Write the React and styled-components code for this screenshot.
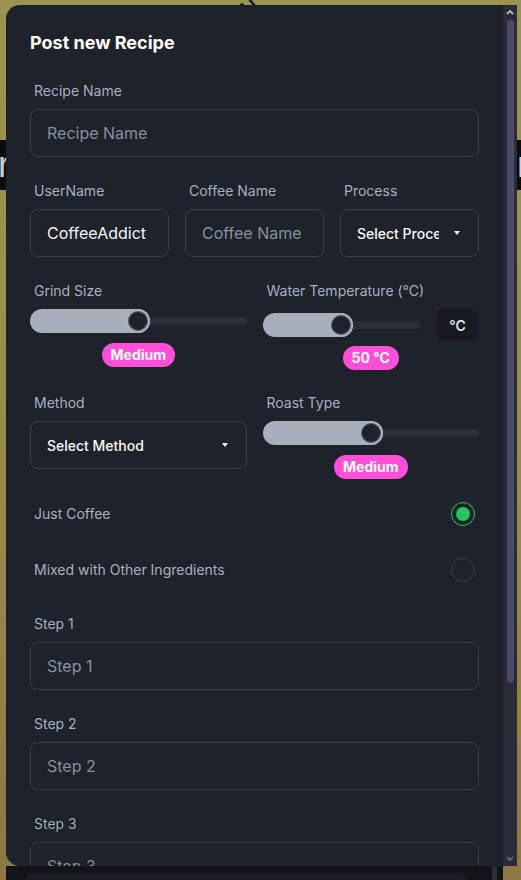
import React from "react";
import styled, { createGlobalStyle } from "styled-components";

const Global = createGlobalStyle`
  html, body { margin: 0; padding: 0; }
  body {
    background: linear-gradient(180deg, #9d9350 0%, #988b4b 55%, #8d7843 100%);
    font-family: Inter, "Noto Sans", sans-serif;
    overflow: hidden;
  }
  * { box-sizing: border-box; }
`;

/* ---------- backdrop page ---------- */
const Page = styled.div`
  height: 880px;
  display: flex;
  flex-direction: column;
  overflow: hidden;
`;

const LogoMark = styled.svg`
  display: block;
  margin-left: 238px;
  flex-shrink: 0;
`;

const HeroBand = styled.div`
  margin-top: 134px;
  height: 50px;
  background: #0b0b0c;
  display: flex;
  justify-content: space-between;
  align-items: center;
  overflow: hidden;
`;

const HeroLetter = styled.span`
  font-family: "Liberation Sans", Arial, sans-serif;
  font-size: 36px;
  line-height: 1;
  color: #cfcfcf;
  margin: ${(p) => (p.$right ? "0 -14px 0 0" : "0 0 0 -2px")};
  width: ${(p) => (p.$right ? "18px" : "auto")};
`;

const BottomPanel = styled.div`
  margin-top: auto;
  margin-left: 6px;
  width: 497px;
  height: 14px;
  background: #111418;
  display: flex;
  padding: 7px 6px 0 19px;
`;

const BottomCard = styled.div`
  width: 442px;
  background: #1a1d23;
  border-radius: 12px 12px 0 0;
`;

const BottomStripe = styled.div`
  width: 5px;
  margin-left: auto;
  margin-top: -7px;
  background: #2b2d3d;
`;

/* ---------- modal ---------- */
const Overlay = styled.div`
  position: fixed;
  top: 5px;
  left: 6px;
  width: 511px;
  height: 861px;
  display: flex;
`;

const Modal = styled.div`
  flex: 1;
  min-width: 0;
  background: #1e222b;
  border-radius: 14px 0 0 14px;
  overflow: hidden;
  padding: 24px 24px 0;
  display: flex;
  flex-direction: column;
`;

const Title = styled.h2`
  margin: 0 0 24px;
  font-size: 18px;
  line-height: 28px;
  font-weight: 700;
  color: #ffffff;
`;

const Section = styled.div`
  margin-bottom: ${(p) => p.$mb ?? 24}px;
`;

const Grid = styled.div`
  display: grid;
  grid-template-columns: repeat(${(p) => p.$cols}, 1fr);
  column-gap: 16px;
  align-items: start;
`;

const Field = styled.div`
  display: flex;
  flex-direction: column;
  gap: 8px;
  min-width: 0;
`;

const Label = styled.label`
  font-size: 14px;
  line-height: 20px;
  color: #a6b0c0;
  padding-left: 4px;
  white-space: nowrap;
`;

const Input = styled.input`
  height: 48px;
  width: 100%;
  min-width: 0;
  border: 1px solid #393e49;
  border-radius: 8px;
  background: transparent;
  padding: 0 16px;
  font-family: Inter, "Noto Sans", sans-serif;
  font-size: 16px;
  color: #f3f5f8;
  outline: none;
  &::placeholder { color: #8590a0; }
`;

const Select = styled.div`
  height: 48px;
  border: 1px solid #393e49;
  border-radius: 8px;
  display: flex;
  align-items: center;
  padding: 0 18px 0 16px;
  min-width: 0;
`;

const SelectText = styled.span`
  flex: 1;
  min-width: 0;
  overflow: hidden;
  white-space: nowrap;
  font-size: 14px;
  font-weight: 500;
  color: #f8fafc;
  margin-right: 15px;
`;

const Caret = styled.span`
  width: 0;
  height: 0;
  border-left: 3.5px solid transparent;
  border-right: 3.5px solid transparent;
  border-top: 4px solid #f1f5f9;
  flex-shrink: 0;
`;

const SliderControl = styled.div`
  display: flex;
  flex-direction: column;
  align-items: center;
`;

const BarRow = styled.div`
  align-self: stretch;
  display: flex;
  align-items: center;
  gap: 16px;
`;

const SliderBar = styled.div`
  position: relative;
  flex: 1;
  min-width: 0;
  height: 24px;
  display: flex;
  align-items: center;
  &::before {
    content: "";
    position: absolute;
    left: 0;
    right: 0;
    top: 8px;
    height: 8px;
    border-radius: 4px;
    background: #2b2f39;
  }
`;

const Fill = styled.div`
  position: relative;
  height: 24px;
  border-radius: 12px;
  background: #a8aebb;
`;

const Thumb = styled.span`
  position: absolute;
  right: 0;
  top: 0;
  width: 24px;
  height: 24px;
  border-radius: 50%;
  background: #1e222b;
  border: 2px solid #aab0bd;
  box-shadow: inset 0 0 0 1px #5c6270;
`;

const Badge = styled.span`
  margin-top: ${(p) => p.$gap ?? 10}px;
  height: 24px;
  line-height: 24px;
  padding: 0 9px;
  border-radius: 12px;
  background: #ff4fd8;
  color: #ffffff;
  font-size: 14px;
  font-weight: 700;
  white-space: nowrap;
`;

const UnitBox = styled.div`
  width: 43px;
  height: 32px;
  border-radius: 8px;
  background: #171a20;
  display: flex;
  align-items: center;
  justify-content: center;
  font-size: 14px;
  font-weight: 600;
  color: #dfe5ee;
  flex-shrink: 0;
`;

const RadioGroup = styled.div`
  display: flex;
  flex-direction: column;
  gap: 32px;
  margin-top: 23px;
  margin-bottom: 32px;
`;

const RadioRow = styled.div`
  display: flex;
  align-items: center;
  justify-content: space-between;
  padding: 0 4px;
  height: 24px;
`;

const RadioText = styled.span`
  font-size: 14px;
  line-height: 20px;
  color: #a6b0c0;
`;

const Radio = styled.span`
  width: 24px;
  height: 24px;
  border-radius: 50%;
  border: 1px solid ${(p) => (p.$checked ? "#22c55e" : "#393e49")};
  display: flex;
  align-items: center;
  justify-content: center;
  &::after {
    content: "";
    width: 14px;
    height: 14px;
    border-radius: 50%;
    background: ${(p) => (p.$checked ? "#22c55e" : "transparent")};
  }
`;

/* ---------- scrollbar drawing ---------- */
const ScrollBar = styled.div`
  width: 14px;
  flex-shrink: 0;
  background: #2a2c3a;
  display: flex;
  flex-direction: column;
  align-items: center;
`;

const Arrow = styled.svg`
  display: block;
  flex-shrink: 0;
  margin: ${(p) => (p.$down ? "auto 0 5px" : "5px 0 0")};
`;

const ScrollThumb = styled.div`
  width: 7px;
  height: 663px;
  margin-top: 5px;
  border-radius: 4px;
  background: #4b4c68;
`;

function Bar({ value }) {
  return (
    <SliderBar>
      <Fill style={{ width: `calc(${value} * (100% - 24px) + 24px)` }}>
        <Thumb />
      </Fill>
    </SliderBar>
  );
}

function Slider({ value, label, unit }) {
  return (
    <SliderControl>
      {unit ? (
        <BarRow>
          <Bar value={value} />
          <UnitBox>{unit}</UnitBox>
        </BarRow>
      ) : (
        <BarRow>
          <Bar value={value} />
        </BarRow>
      )}
      <Badge $gap={unit ? 5 : 10}>{label}</Badge>
    </SliderControl>
  );
}

function TextField({ label, placeholder, value }) {
  return (
    <Field>
      <Label>{label}</Label>
      {value !== undefined ? (
        <Input defaultValue={value} />
      ) : (
        <Input placeholder={placeholder} />
      )}
    </Field>
  );
}

export default function App() {
  return (
    <>
      <Global />
      <Page>
        <LogoMark width="20" height="6" viewBox="0 0 20 6">
          <path d="M2 4.5 Q4 2 6 4.5 Q5 7 3 6 Z" fill="#111" />
          <path d="M11 -1 L17 6" stroke="#111" strokeWidth="2.4" strokeLinecap="round" />
        </LogoMark>
        <HeroBand>
          <HeroLetter>r</HeroLetter>
          <HeroLetter $right>r</HeroLetter>
        </HeroBand>
        <BottomPanel>
          <BottomCard />
          <BottomStripe />
        </BottomPanel>
      </Page>

      <Overlay>
        <Modal>
          <Title>Post new Recipe</Title>

          <Section>
            <TextField label="Recipe Name" placeholder="Recipe Name" />
          </Section>

          <Section>
            <Grid $cols={3}>
              <TextField label="UserName" value="CoffeeAddict" />
              <TextField label="Coffee Name" placeholder="Coffee Name" />
              <Field>
                <Label>Process</Label>
                <Select>
                  <SelectText>Select Process</SelectText>
                  <Caret />
                </Select>
              </Field>
            </Grid>
          </Section>

          <Section $mb={23}>
            <Grid $cols={2}>
              <Field>
                <Label>Grind Size</Label>
                <Slider value={0.5} label="Medium" />
              </Field>
              <Field>
                <Label>Water Temperature (°C)</Label>
                <Slider value={0.5} label="50 °C" unit="°C" />
              </Field>
            </Grid>
          </Section>

          <Section $mb={0}>
            <Grid $cols={2}>
              <Field>
                <Label>Method</Label>
                <Select>
                  <SelectText>Select Method</SelectText>
                  <Caret />
                </Select>
              </Field>
              <Field>
                <Label>Roast Type</Label>
                <Slider value={0.5} label="Medium" />
              </Field>
            </Grid>
          </Section>

          <RadioGroup>
            <RadioRow>
              <RadioText>Just Coffee</RadioText>
              <Radio $checked />
            </RadioRow>
            <RadioRow>
              <RadioText>Mixed with Other Ingredients</RadioText>
              <Radio />
            </RadioRow>
          </RadioGroup>

          <Section>
            <TextField label="Step 1" placeholder="Step 1" />
          </Section>
          <Section>
            <TextField label="Step 2" placeholder="Step 2" />
          </Section>
          <Section>
            <TextField label="Step 3" placeholder="Step 3" />
          </Section>
        </Modal>
        <ScrollBar>
          <Arrow width="8" height="5" viewBox="0 0 8 5">
            <polyline points="1,4 4,1 7,4" fill="none" stroke="#cfd0da" strokeWidth="1.6" />
          </Arrow>
          <ScrollThumb />
          <Arrow $down width="8" height="5" viewBox="0 0 8 5">
            <polyline points="1,1 4,4 7,1" fill="none" stroke="#6c6e80" strokeWidth="1.6" />
          </Arrow>
        </ScrollBar>
      </Overlay>
    </>
  );
}
